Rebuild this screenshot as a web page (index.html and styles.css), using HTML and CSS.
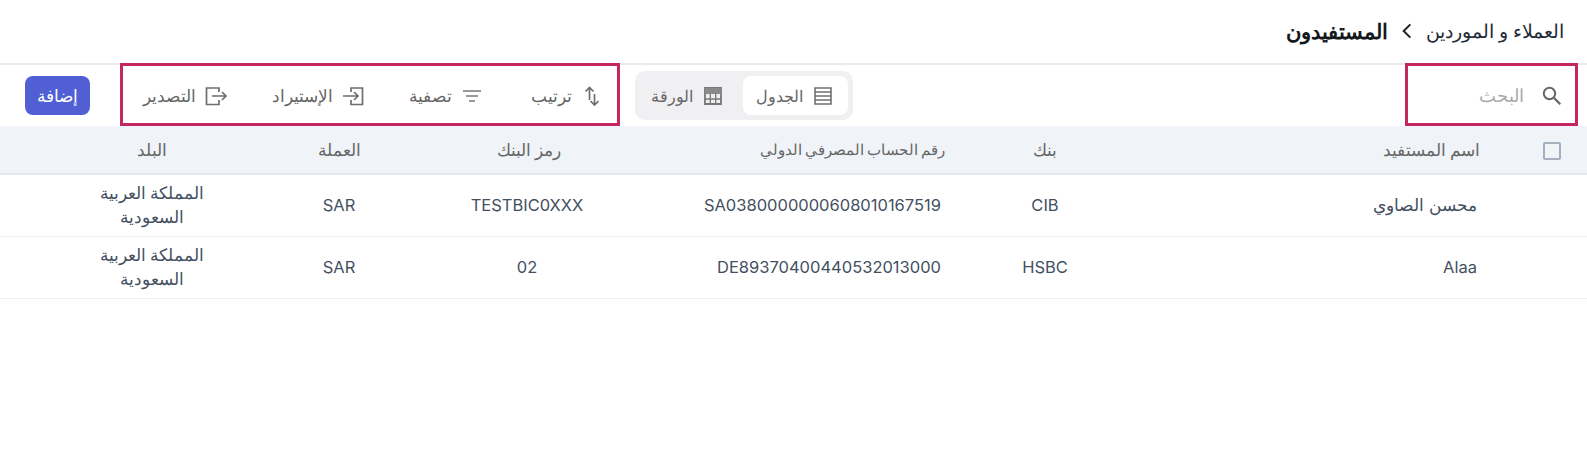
FILE: index.html
```html
<!DOCTYPE html>
<html lang="ar" dir="rtl">
<head>
    <meta charset="UTF-8">
    <meta name="viewport" content="width=device-width, initial-scale=1.0">
    <title>المستفيدون</title>
    <link rel="stylesheet" href="styles.css">
</head>
<body>
    <div class="page">
        <header class="topbar">
            <span class="crumb">العملاء و الموردين</span>
            <svg class="crumb-sep" viewBox="0 0 24 24"><path d="M16 4l-8 8 8 8" fill="none" stroke="#222" stroke-width="2.400"/></svg>
            <strong class="crumb-current">المستفيدون</strong>
        </header>

        <div class="toolbar">
            <div class="search">
                <svg class="icon" viewBox="0 0 24 24"><circle cx="9.500" cy="9.500" r="5.700" fill="none" stroke="#666" stroke-width="2"/><path d="M14 14l6.300 6.300" stroke="#666" stroke-width="2.200"/></svg>
                <span class="search-text">البحث</span>
            </div>

            <div class="switch">
                <div class="switch-item active">
                    <svg class="icon" viewBox="0 0 24 24"><path d="M4 4h16v16H4zM4 8h16M4 12h16M4 16h16" fill="none" stroke="#707070" stroke-width="1.600"/></svg>
                    الجدول
                </div>
                <div class="switch-item">
                    <svg class="icon" viewBox="0 0 24 24"><path d="M4 4h16v16H4z" fill="none" stroke="#777" stroke-width="1.800"/><path d="M4 4h16v6H4z" fill="#8a8a8a"/><path d="M4 15h16M9.300 10v10M14.700 10v10" fill="none" stroke="#777" stroke-width="1.300"/></svg>
                    الورقة
                </div>
            </div>

            <div class="actions">
                <div class="action action-sort">
                    <svg class="icon" viewBox="0 0 24 24"><path d="M9.500 16V3.500M5.500 7.500l4-4 4 4M14.500 10v11M10.500 17l4 4 4-4" fill="none" stroke="#6e6e6e" stroke-width="1.700"/></svg>
                    ترتيب
                </div>
                <div class="action">
                    <svg class="icon" viewBox="0 0 24 24"><path d="M3 7h18M6 12h12M9 17h6" fill="none" stroke="#777" stroke-width="1.600"/></svg>
                    تصفية
                </div>
                <div class="action">
                    <svg class="icon" viewBox="0 0 24 24"><path d="M10 8V4h11.500v16.500H10V16M2 12h15M13 8l4 4-4 4" fill="none" stroke="#6e6e6e" stroke-width="1.700"/></svg>
                    الإستيراد
                </div>
                <div class="action">
                    <svg class="icon" viewBox="0 0 24 24"><path d="M15 8V4H2.500v16.500H15V16M8 12h14M18 8l4 4-4 4" fill="none" stroke="#6e6e6e" stroke-width="1.700"/></svg>
                    التصدير
                </div>
            </div>

            <button class="btn-add">إضافة</button>
        </div>

        <table class="grid">
            <thead>
                <tr>
                    <th class="col-check"><span class="checkbox"></span></th>
                    <th class="col-name">اسم المستفيد</th>
                    <th class="col-bank">بنك</th>
                    <th class="col-iban">رقم الحساب المصرفي الدولي</th>
                    <th class="col-bic">رمز البنك</th>
                    <th class="col-cur">العملة</th>
                    <th class="col-country">البلد</th>
                </tr>
            </thead>
            <tbody>
                <tr>
                    <td class="col-check"></td>
                    <td class="col-name">محسن الصاوي</td>
                    <td class="col-bank">CIB</td>
                    <td class="col-iban">SA0380000000608010167519</td>
                    <td class="col-bic">TESTBIC0XXX</td>
                    <td class="col-cur">SAR</td>
                    <td class="col-country">المملكة العربية السعودية</td>
                </tr>
                <tr>
                    <td class="col-check"></td>
                    <td class="col-name">Alaa</td>
                    <td class="col-bank">HSBC</td>
                    <td class="col-iban">DE89370400440532013000</td>
                    <td class="col-bic">02</td>
                    <td class="col-cur">SAR</td>
                    <td class="col-country">المملكة العربية السعودية</td>
                </tr>
            </tbody>
        </table>

        <!-- annotation frames -->
        <div class="mark mark-search"></div>
        <div class="mark mark-actions"></div>
    </div>
</body>
</html>
```

FILE: styles.css
```css
* {
    box-sizing: border-box;
}
body {
    margin: 0;
    background-color: white;
    color: #44505f;
    font-family: Inter, "Noto Sans", Roboto, sans-serif;
    font-size: 16px;
}
.page {
    position: relative;
    height: 465px;
    overflow: hidden;
}
.topbar {
    height: 65px;
    border-bottom: 2px solid #e9e9ee;
    display: flex;
    align-items: center;
    padding: 0 23px 1px 0;
    font-size: 18.600px;
    color: #222b36;
}
.crumb-sep {
    width: 20px;
    height: 20px;
    margin: 0 9px;
}
.crumb-current {
    color: #15181d;
    font-size: 21px;
}
.toolbar {
    height: 61px;
    display: flex;
    align-items: center;
    color: #666;
}
.icon {
    width: 24px;
    height: 24px;
    flex-shrink: 0;
}
.search {
    flex: 1;
    display: flex;
    align-items: center;
    gap: 16px;
    padding-right: 23px;
    color: #aaa;
    font-size: 18px;
}
.switch {
    width: 218px;
    height: 49px;
    background-color: #f0f0f2;
    border-radius: 10px;
    padding: 5px;
    display: flex;
}
.switch-item {
    display: flex;
    align-items: center;
    gap: 8px;
    padding: 0 18px 0 0;
    border-radius: 8px;
}
.switch-item.active {
    background-color: white;
    width: 105px;
    padding-right: 13px;
}
.actions {
    display: flex;
    align-items: center;
    margin-right: 17px;
    width: 498px;
    padding-right: 14px;
    gap: 44px;
    font-size: 17px;
}
.action {
    display: flex;
    align-items: center;
    gap: 8px;
}
.action-sort {
    padding-left: 3px;
}
.btn-add {
    margin-right: 30px;
    margin-left: 25px;
    width: 65px;
    height: 39px;
    border: none;
    border-radius: 8px;
    background-color: #505fd3;
    color: white;
    font-family: inherit;
    font-size: 16.500px;
    font-weight: 500;
    padding: 0;
}
.grid {
    width: 100%;
    border-collapse: collapse;
    table-layout: fixed;
}
.grid th {
    height: 48px;
    background-color: #f0f3f8;
    border-bottom: 2px solid #e4e8ef;
    font-weight: 500;
    color: #666;
    font-size: 16.500px;
}
.grid td {
    height: 62px;
    border-bottom: 1px solid #f1f1f3;
    line-height: 24px;
    font-size: 16.500px;
}
.grid th, .grid td {
    padding: 0;
    text-align: center;
}
.col-check { width: 90px; }
.col-name { width: 400px; }
.grid .col-name { text-align: right; padding-right: 20px; }
.grid th.col-name { padding-right: 17px; }
.col-bank { width: 104px; }
.col-iban { width: 313px; }
.grid .col-iban { text-align: right; padding-right: 52px; }
.grid th.col-iban { padding-right: 48px; font-size: 15px; word-spacing: -1px; }
.col-bic { width: 306px; }
.grid th.col-bic { padding-left: 4px; }
.col-cur { width: 70px; }
.col-country { width: 304px; }
.grid .col-country { padding: 0 80px; }
.grid th.col-check { padding-left: 20px; }
.checkbox {
    display: inline-block;
    width: 18px;
    height: 18px;
    border: 2px solid #a4afc0;
    border-radius: 2px;
    vertical-align: middle;
}
.mark {
    position: absolute;
    top: 63px;
    height: 63px;
    border: 3px solid #c4265e;
    pointer-events: none;
}
.mark-search {
    left: 1405px;
    width: 173px;
}
.mark-actions {
    left: 120px;
    width: 500px;
}
```
